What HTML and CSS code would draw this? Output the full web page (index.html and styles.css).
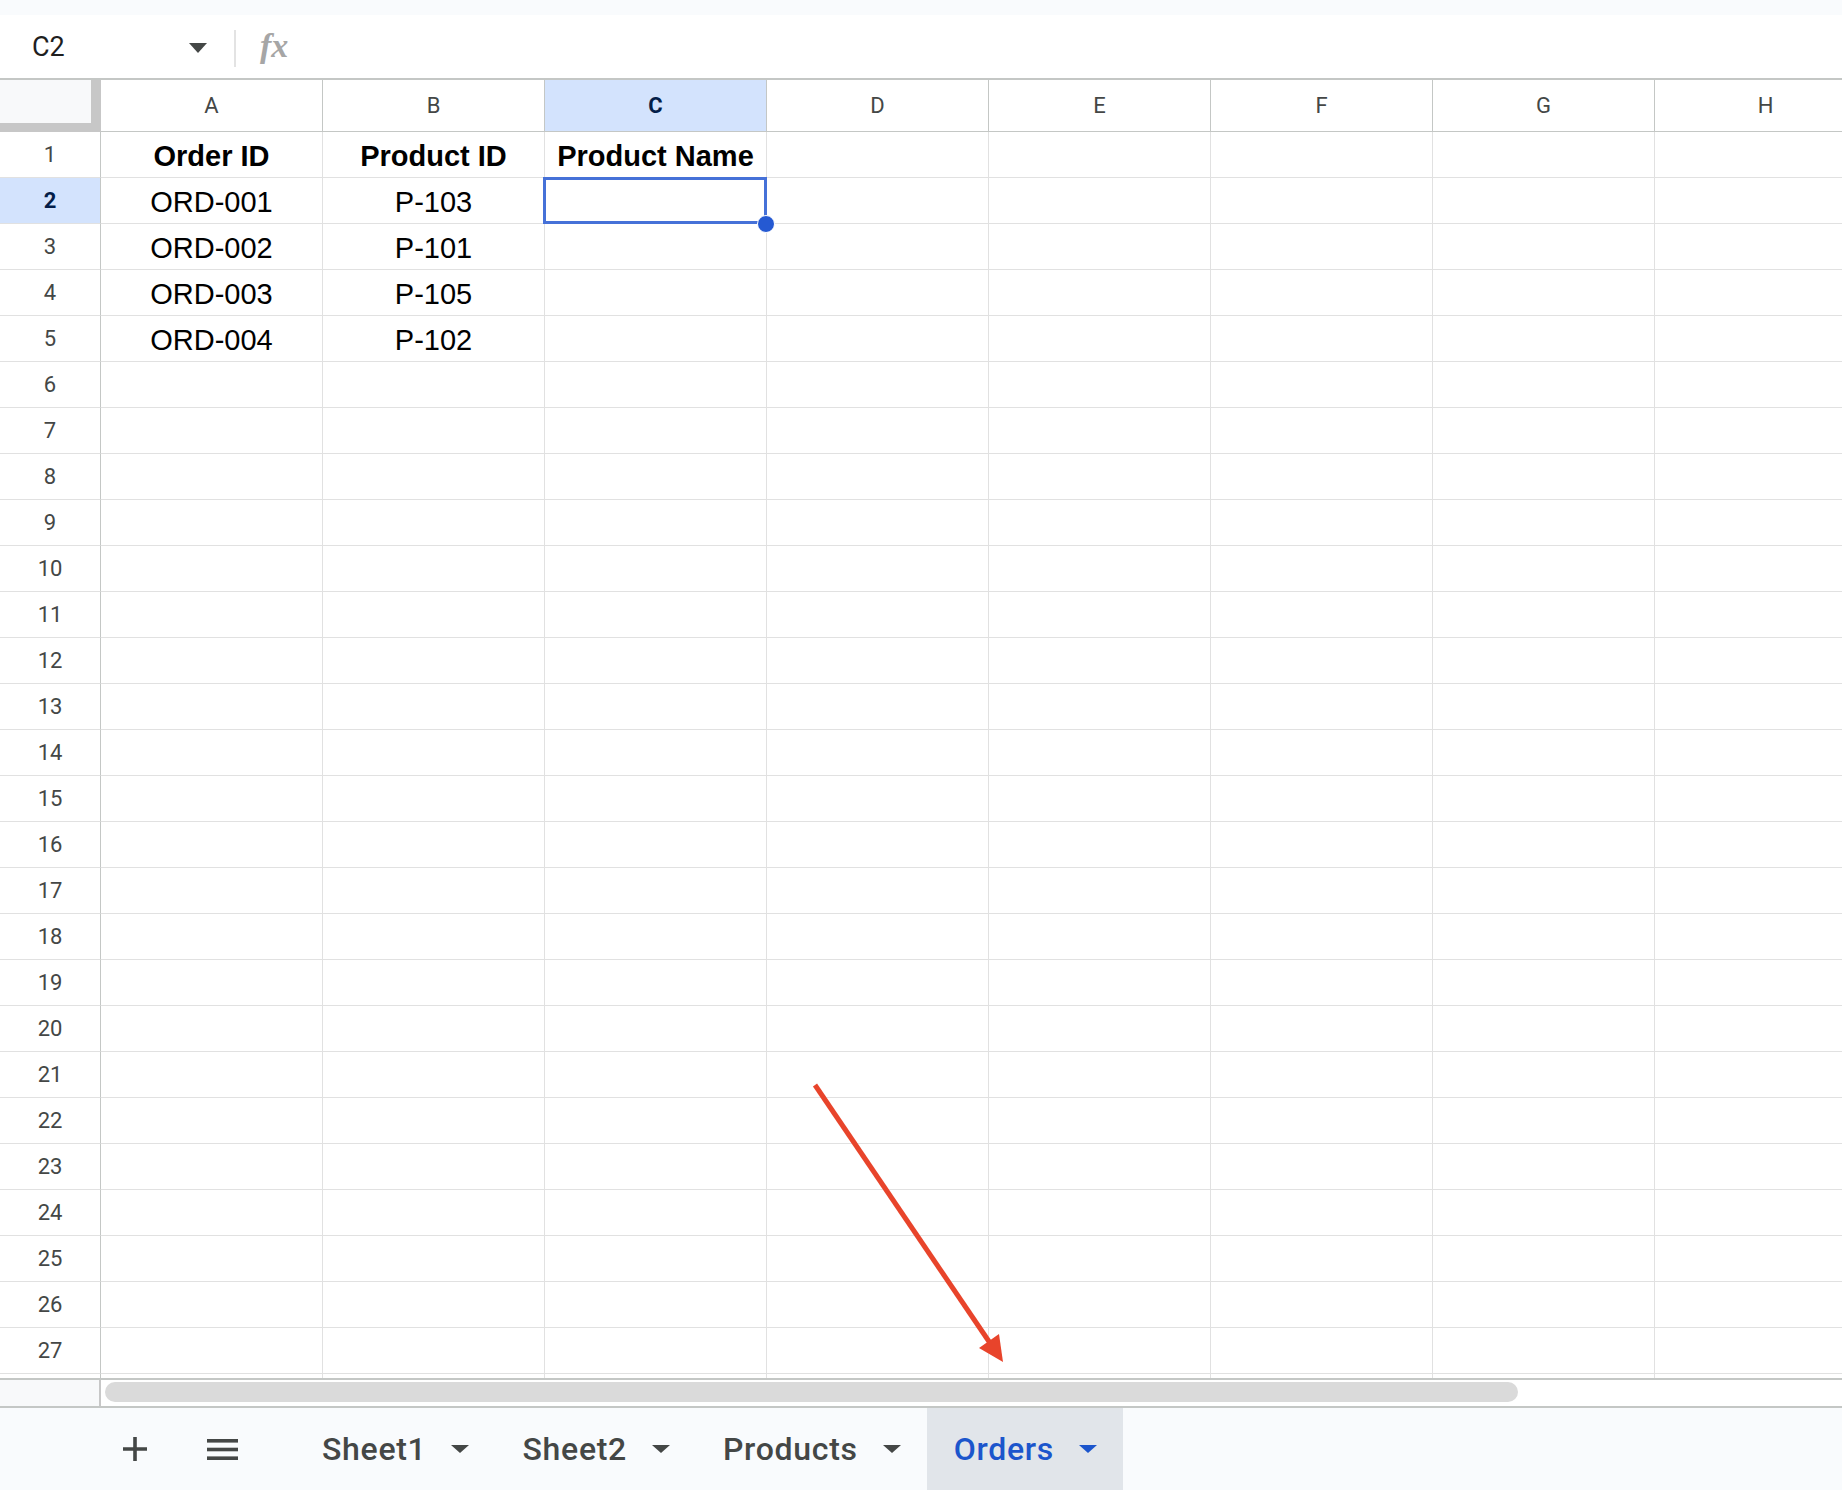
FILE: index.html
```html
<!DOCTYPE html>
<html lang="en">
<head>
  <meta charset="UTF-8" />
  <title>Orders - Sheet</title>
  <link rel="stylesheet" href="styles.css">
</head>
<body>
  <div class="top-strip"></div>

  <div class="formula-bar">
    <div class="name-box">
      <span>C2</span>
      <span class="caret caret-name"></span>
    </div>
    <div class="fb-sep"></div>
    <span class="fx">fx</span>
  </div>

  <div class="sheet">
    <div class="grid" id="grid"></div>
  </div>

  <div class="hscroll">
    <div class="hscroll-corner"></div>
    <div class="hscroll-track">
      <div class="hscroll-thumb"></div>
    </div>
  </div>

  <div class="tab-bar">
    <svg class="tab-icon" width="24" height="24" viewBox="0 0 24 24">
      <path d="M12 0v24M0 12h24" stroke="#444746" stroke-width="3.6" fill="none"/>
    </svg>
    <svg class="tab-icon menu-icon" width="31" height="21" viewBox="0 0 31 21">
      <rect x="0" y="0" width="31" height="3.6" fill="#444746"/>
      <rect x="0" y="8.7" width="31" height="3.6" fill="#444746"/>
      <rect x="0" y="17.4" width="31" height="3.6" fill="#444746"/>
    </svg>
    <div class="tabs">
      <div class="tab"><span>Sheet1</span><span class="caret"></span></div>
      <div class="tab"><span>Sheet2</span><span class="caret"></span></div>
      <div class="tab"><span>Products</span><span class="caret"></span></div>
      <div class="tab active"><span>Orders</span><span class="caret"></span></div>
    </div>
  </div>

  <svg class="annotation" width="1842" height="1490" viewBox="0 0 1842 1490">
    <line x1="815" y1="1085" x2="990" y2="1343" stroke="#e8442b" stroke-width="5" stroke-linecap="butt"/>
    <polygon points="1003,1362 979,1348 999,1334" fill="#e8442b"/>
  </svg>

  <script>
    const columns = ["A", "B", "C", "D", "E", "F", "G", "H"];
    const data = [
      ["Order ID", "Product ID", "Product Name"],
      ["ORD-001", "P-103", ""],
      ["ORD-002", "P-101", ""],
      ["ORD-003", "P-105", ""],
      ["ORD-004", "P-102", ""]
    ];
    const visibleRows = 27;
    const activeRow = 2;
    const activeCol = "C";

    const grid = document.getElementById("grid");

    function addCell(className, text) {
      const div = document.createElement("div");
      div.className = className;
      if (text) div.textContent = text;
      grid.appendChild(div);
      return div;
    }

    addCell("corner");
    columns.forEach(c => {
      addCell("col-head" + (c === activeCol ? " active" : ""), c);
    });

    // one extra row, only partly shown under the scrollbar
    for (let r = 1; r <= visibleRows + 1; r++) {
      const label = r <= visibleRows ? String(r) : "";
      addCell("row-head" + (r === activeRow ? " active" : ""), label);
      const values = data[r - 1] || [];
      columns.forEach((c, i) => {
        let cls = "cell";
        if (r === 1) cls += " bold";
        const cell = addCell(cls, values[i] || "");
        if (r === activeRow && c === activeCol) {
          cell.classList.add("selected");
          cell.innerHTML = '<div class="sel-box"></div><div class="sel-handle"></div>';
        }
      });
    }
  </script>
</body>
</html>
```

FILE: styles.css
```css
* {
  margin: 0;
  padding: 0;
  box-sizing: border-box;
}

body {
  width: 1842px;
  height: 1490px;
  overflow: hidden;
  position: relative;
  background-color: #ffffff;
  font-family: 'Liberation Sans', Arial, sans-serif;
}

.top-strip {
  height: 15px;
  background-color: #f9fbfd;
}

/* Formula bar */
.formula-bar {
  height: 63px;
  display: flex;
  align-items: center;
  background-color: #ffffff;
}

.name-box {
  width: 234px;
  padding: 0 27px 0 32px;
  display: flex;
  justify-content: space-between;
  align-items: center;
  font-family: Roboto, sans-serif;
  font-size: 27px;
  color: #1f1f1f;
}

.caret {
  width: 0;
  height: 0;
  border-left: 9px solid transparent;
  border-right: 9px solid transparent;
  border-top: 8px solid #444746;
}

.caret-name {
  border-top-width: 10px;
  margin-top: 2px;
}

.fb-sep {
  width: 2px;
  height: 37px;
  margin-top: 3px;
  background-color: #e3e3e3;
  margin-right: 24px;
}

.fx {
  font-family: 'Liberation Serif', serif;
  font-style: italic;
  font-weight: bold;
  font-size: 34px;
  color: #a6a6a6;
  margin-top: -2px;
}

/* Sheet grid */
.sheet {
  height: 1300px;
  border-top: 2px solid #c4c7c5;
  overflow: hidden;
}

.grid {
  display: grid;
  grid-template-columns: 101px repeat(8, 222px);
  grid-auto-rows: 46px;
  grid-template-rows: 52px;
}

.corner {
  background-color: #f8f9fa;
  border-right: 10px solid #c7c7c7;
  border-bottom: 9px solid #c7c7c7;
}

.col-head {
  display: flex;
  align-items: center;
  justify-content: center;
  border-right: 1px solid #c4c7c5;
  border-bottom: 1px solid #c4c7c5;
  font-family: Roboto, sans-serif;
  font-size: 22px;
  color: #444746;
}

.row-head {
  display: flex;
  align-items: center;
  justify-content: center;
  border-right: 1px solid #c4c7c5;
  border-bottom: 1px solid #e1e1e1;
  font-family: Roboto, sans-serif;
  font-size: 22px;
  color: #444746;
}

.col-head.active,
.row-head.active {
  background-color: #d3e3fd;
  color: #041e49;
  font-weight: bold;
}

.cell {
  position: relative;
  display: flex;
  align-items: flex-end;
  justify-content: center;
  padding-bottom: 4px;
  border-right: 1px solid #e1e1e1;
  border-bottom: 1px solid #e1e1e1;
  font-size: 29px;
  line-height: 33px;
  color: #000000;
  white-space: nowrap;
}

.cell.bold {
  font-weight: bold;
}

.sel-box {
  position: absolute;
  left: -2px;
  top: -1px;
  width: 224px;
  height: 47px;
  border: 3px solid #4671d8;
}

.sel-handle {
  position: absolute;
  left: 212px;
  top: 37px;
  width: 18px;
  height: 18px;
  border-radius: 50%;
  background-color: #2559d2;
  border: 1px solid #ffffff;
  z-index: 2;
}

/* Horizontal scrollbar */
.hscroll {
  height: 30px;
  display: flex;
  border-top: 2px solid #c4c7c5;
  border-bottom: 2px solid #c4c7c5;
}

.hscroll-corner {
  width: 101px;
  background-color: #f8f9fa;
  border-right: 2px solid #c7c7c7;
}

.hscroll-track {
  flex: 1;
  padding: 2px 0 0 4px;
}

.hscroll-thumb {
  width: 1413px;
  height: 20px;
  border-radius: 10px;
  background-color: #dadada;
}

/* Sheet tabs */
.tab-bar {
  height: 82px;
  display: flex;
  align-items: center;
  padding-left: 123px;
  background-color: #f9fbfd;
}

.tab-icon {
  flex-shrink: 0;
}

.menu-icon {
  margin-left: 60px;
}

.tabs {
  display: flex;
  align-self: stretch;
  margin-left: 57px;
}

.tab {
  display: flex;
  align-items: center;
  gap: 25px;
  padding: 0 26px 0 27px;
  font-family: Roboto, sans-serif;
  font-weight: 500;
  font-size: 32px;
  letter-spacing: 0.7px;
  color: #444746;
}

.tab.active {
  background-color: #e1e5ea;
  color: #1b55cc;
}

.tab.active .caret {
  border-top-color: #1b55cc;
}

.annotation {
  position: absolute;
  left: 0;
  top: 0;
  pointer-events: none;
}
```
